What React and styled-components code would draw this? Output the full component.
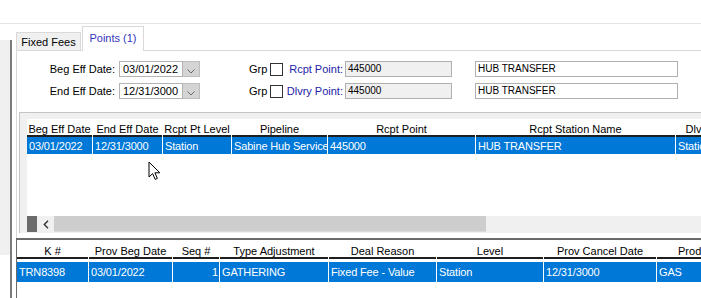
import React from "react";
import styled, { createGlobalStyle } from "styled-components";

const GlobalStyle = createGlobalStyle`
  html, body {
    margin: 0;
    padding: 0;
    background: #fff;
    overflow: hidden;
  }
  body {
    font-family: "Liberation Sans", Arial, sans-serif;
    font-size: 11px;
    color: #000;
  }
`;

const Screen = styled.div`
  position: relative;
  width: 701px;
  height: 298px;
  overflow: hidden;
  display: flex;
  flex-direction: column;
`;

const TopStrip = styled.div`
  flex: none;
  height: 23px;
  border-bottom: 1px solid #e3e3e3;
`;

const Body = styled.div`
  flex: 1;
  min-height: 0;
  display: flex;
`;

const SidePane = styled.div`
  flex: none;
  width: 10px;
  margin-top: 16px;
  border-right: 2px solid #7b7b7b;
`;

const SideFill = styled.div`
  height: 215px;
  background: #f0f0f0;
`;

const Main = styled.div`
  flex: 1;
  min-width: 0;
  margin-left: 4px;
  display: flex;
  flex-direction: column;
`;

const TabStrip = styled.div`
  flex: none;
  height: 26px;
  display: flex;
  align-items: flex-end;
  position: relative;
  z-index: 1;
`;

const Tab = styled.div`
  box-sizing: border-box;
  width: ${(p) => p.$w}px;
  height: ${(p) => (p.$active ? 25 : 18)}px;
  margin-bottom: ${(p) => (p.$active ? -1 : 0)}px;
  margin-left: ${(p) => (p.$active ? 1 : 0)}px;
  padding-bottom: ${(p) => (p.$active ? 3 : 0)}px;
  border: 1px solid #d9d9d9;
  border-bottom: none;
  background: ${(p) => (p.$active ? "#fff" : "#f0f0f0")};
  color: ${(p) => (p.$active ? "#3535c0" : "#000")};
  display: flex;
  align-items: center;
  justify-content: center;
  white-space: nowrap;
`;

const TabBody = styled.div`
  flex: none;
  box-sizing: border-box;
  height: 188px;
  border-top: 1px solid #d9d9d9;
  border-left: 1px solid #d9d9d9;
  display: flex;
  flex-direction: column;
`;

const Form = styled.div`
  flex: none;
  box-sizing: border-box;
  height: 61px;
  padding-top: 10px;
  display: flex;
  flex-direction: column;
  gap: 6px;
`;

const FormRow = styled.div`
  height: 16px;
  display: flex;
  align-items: center;
`;

const Label = styled.div`
  width: ${(p) => p.$w}px;
  text-align: right;
  color: ${(p) => (p.$blue ? "#2323a8" : "#000")};
  white-space: nowrap;
`;

const DateField = styled.div`
  margin-left: 4px;
  display: flex;
  height: 16px;
`;

const DateInput = styled.div`
  box-sizing: border-box;
  width: 64px;
  height: 16px;
  border: 1px solid #b4b4b4;
  padding-left: 3px;
  line-height: 14px;
`;

const DropButton = styled.div`
  box-sizing: border-box;
  width: 17px;
  height: 16px;
  background: #d4d4d4;
  border: 1px solid #bdbdbd;
  border-left: none;
  display: flex;
  align-items: flex-end;
  justify-content: center;
  padding-bottom: 2px;
`;

const GrpText = styled.div`
  margin-left: 49px;
  width: 19px;
`;

const Check = styled.div`
  box-sizing: border-box;
  width: 13px;
  height: 13px;
  margin-left: 2px;
  border: 1px solid #333;
  background: #fff;
`;

const TextInput = styled.div`
  box-sizing: border-box;
  width: ${(p) => p.$w}px;
  height: 16px;
  margin-left: ${(p) => p.$ml}px;
  border: 1px solid #b0b0b0;
  background: ${(p) => (p.$readOnly ? "#f0f0f0" : "#fff")};
  padding-left: 2px;
  font-size: 10px;
  line-height: 14px;
  white-space: nowrap;
`;

const GridPanel = styled.div`
  flex: none;
  margin-left: 2px;
  border-top: 1px solid #c4c4c4;
  border-left: 1px solid #c4c4c4;
  background: #f0f0f0;
  padding: 6px 0 1px 7px;
`;

const Grid = styled.div`
  height: 113px;
  background: #fff;
  display: flex;
  flex-direction: column;
`;

const HeaderRow = styled.div`
  flex: none;
  height: ${(p) => p.$h}px;
  display: flex;
`;

const HeadCell = styled.div`
  flex: none;
  box-sizing: border-box;
  position: relative;
  width: ${(p) => p.$w - 1}px;
  margin-right: 1px;
  border-bottom: 2px solid #1f1f1f;
  display: flex;
  align-items: flex-end;
  justify-content: center;
  white-space: nowrap;
  overflow: hidden;

  &::after {
    content: "";
    position: absolute;
    right: -1px;
    top: 1px;
    bottom: 2px;
    width: 1px;
    background: #e2e2e2;
  }
`;

const DataRow = styled.div`
  flex: none;
  height: ${(p) => p.$h}px;
  margin-top: ${(p) => p.$gap || 0}px;
  display: flex;
  background: #0078d7;
  color: #fff;
`;

const DataCell = styled.div`
  flex: none;
  box-sizing: border-box;
  width: ${(p) => p.$w}px;
  border-right: 1px solid #fff;
  padding: 0 ${(p) => (p.$right ? 1 : 0)}px 0 ${(p) => (p.$right ? 0 : 2)}px;
  letter-spacing: -0.15px;
  display: flex;
  align-items: center;
  justify-content: ${(p) => (p.$right ? "flex-end" : "flex-start")};
  white-space: nowrap;
  overflow: hidden;
`;

const Filler = styled.div`
  flex: 1;
`;

const ScrollBar = styled.div`
  flex: none;
  height: 16px;
  display: flex;
  background: #f0f0f0;
`;

const Corner = styled.div`
  width: 10px;
  background: #6b6b6b;
`;

const ArrowButton = styled.div`
  width: 17px;
  display: flex;
  align-items: center;
  justify-content: center;
`;

const Thumb = styled.div`
  width: 432px;
  background: #cdcdcd;
  border-bottom: 1px solid #dadada;
`;

const BottomGrid = styled.div`
  flex: 1;
  border-top: 2px solid #6b6b6b;
  border-left: 1px solid #6b6b6b;
  padding-top: 1px;
  display: flex;
  flex-direction: column;
`;

const Cursor = styled.svg`
  position: absolute;
  left: 148px;
  top: 161px;
`;

const topCols = [
  { name: "Beg Eff Date", w: 66, val: "03/01/2022" },
  { name: "End Eff Date", w: 70, val: "12/31/3000" },
  { name: "Rcpt Pt Level", w: 69, val: "Station" },
  { name: "Pipeline", w: 96, val: "Sabine Hub Service" },
  { name: "Rcpt Point", w: 148, val: "445000" },
  { name: "Rcpt Station Name", w: 200, val: "HUB TRANSFER" },
  { name: "Dlvry Pt Level", w: 88, val: "Station" },
];

const bottomCols = [
  { name: "K #", w: 72, val: "TRN8398" },
  { name: "Prov Beg Date", w: 84, val: "03/01/2022" },
  { name: "Seq #", w: 47, val: "1", right: true },
  { name: "Type Adjustment", w: 109, val: "GATHERING" },
  { name: "Deal Reason", w: 108, val: "Fixed Fee - Value" },
  { name: "Level", w: 107, val: "Station" },
  { name: "Prov Cancel Date", w: 113, val: "12/31/3000" },
  { name: "Product", w: 81, val: "GAS" },
];

const Chevron = () => (
  <svg width="8" height="5" viewBox="0 0 8 5">
    <path d="M0.5 0.5 L4 4 L7.5 0.5" fill="none" stroke="#6a6a6a" strokeWidth="1" />
  </svg>
);

const PointRow = ({ label, date, blueLabel, point, name }) => (
  <FormRow>
    <Label $w={98}>{label}</Label>
    <DateField>
      <DateInput>{date}</DateInput>
      <DropButton>
        <Chevron />
      </DropButton>
    </DateField>
    <GrpText>Grp</GrpText>
    <Check />
    <Label $w={60} $blue>
      {blueLabel}
    </Label>
    <TextInput $w={107} $ml={2} $readOnly>
      {point}
    </TextInput>
    <TextInput $w={203} $ml={23}>
      {name}
    </TextInput>
  </FormRow>
);

export default function App() {
  return (
    <Screen>
      <GlobalStyle />
      <TopStrip />
      <Body>
        <SidePane>
          <SideFill />
        </SidePane>
        <Main>
          <TabStrip>
            <Tab $w={65}>Fixed Fees</Tab>
            <Tab $w={62} $active>
              Points (1)
            </Tab>
          </TabStrip>
          <TabBody>
            <Form>
              <PointRow
                label="Beg Eff Date:"
                date="03/01/2022"
                blueLabel="Rcpt Point:"
                point="445000"
                name="HUB TRANSFER"
              />
              <PointRow
                label="End Eff Date:"
                date="12/31/3000"
                blueLabel="Dlvry Point:"
                point="445000"
                name="HUB TRANSFER"
              />
            </Form>
            <GridPanel>
              <Grid>
                <HeaderRow $h={18}>
                  {topCols.map((c) => (
                    <HeadCell key={c.name} $w={c.w}>
                      {c.name}
                    </HeadCell>
                  ))}
                </HeaderRow>
                <DataRow $h={17}>
                  {topCols.map((c) => (
                    <DataCell key={c.name} $w={c.w}>
                      {c.val}
                    </DataCell>
                  ))}
                </DataRow>
                <Filler />
                <ScrollBar>
                  <Corner />
                  <ArrowButton>
                    <svg width="6" height="9" viewBox="0 0 6 9">
                      <path d="M5 0.8 L1.3 4.5 L5 8.2" fill="none" stroke="#333" strokeWidth="1.4" />
                    </svg>
                  </ArrowButton>
                  <Thumb />
                </ScrollBar>
              </Grid>
            </GridPanel>
          </TabBody>
          <BottomGrid>
            <HeaderRow $h={18}>
              {bottomCols.map((c) => (
                <HeadCell key={c.name} $w={c.w}>
                  {c.name}
                </HeadCell>
              ))}
            </HeaderRow>
            <DataRow $h={20} $gap={3}>
              {bottomCols.map((c) => (
                <DataCell key={c.name} $w={c.w} $right={c.right}>
                  {c.val}
                </DataCell>
              ))}
            </DataRow>
          </BottomGrid>
        </Main>
      </Body>
      <Cursor width="13" height="20" viewBox="0 0 13 20">
        <path
          d="M1 1 L1 16 L4.6 12.6 L7.2 18.4 L9.4 17.4 L6.9 11.8 L11.8 11.8 Z"
          fill="#fff"
          stroke="#000"
          strokeWidth="1"
          strokeLinejoin="miter"
        />
      </Cursor>
    </Screen>
  );
}
